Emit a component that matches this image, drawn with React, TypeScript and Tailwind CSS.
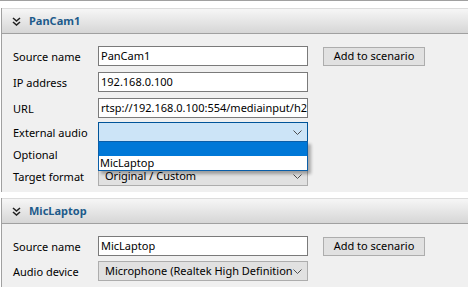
const font = "font-['Noto_Sans',sans-serif]";

const Chevron = () => (
  <svg width="9" height="5" viewBox="0 0 9 5" className="shrink-0">
    <polyline points="0.5,0.5 4.5,4.5 8.5,0.5" fill="none" stroke="#4d4d4d" strokeWidth="1" />
  </svg>
);

const DoubleChevron = () => (
  <svg width="9" height="9" viewBox="0 0 9 9">
    <polyline points="1,1 4.5,4 8,1" fill="none" stroke="#222" strokeWidth="1.6" />
    <polyline points="1,5 4.5,8 8,5" fill="none" stroke="#222" strokeWidth="1.6" />
  </svg>
);

const Header = ({ title }: { title: string }) => (
  <div className="h-[26px] flex items-center gap-[8px] pl-[10px] bg-[linear-gradient(#f6f6f6,#d6d6d6)] border-t border-[#dcdcdc] border-b border-b-[#a0a0a0]">
    <DoubleChevron />
    <span className="text-[11px] font-bold text-[#1d5b8b]">{title}</span>
  </div>
);

const Label = ({ children }: { children: string }) => (
  <div className="w-[85px] text-[11px] text-black leading-none">{children}</div>
);

const TextInput = ({ value }: { value: string }) => (
  <div className="w-[210px] h-[20px] border border-[#7a7a7a] bg-white pl-[2px] flex items-center overflow-hidden whitespace-nowrap text-[11px] text-black">
    {value}
  </div>
);

const Select = ({ value, focused }: { value: string; focused?: boolean }) => (
  <div
    className={
      focused
        ? "w-[210px] h-[20px] border border-[#005499] bg-[#cce4f7] flex items-center pl-[6px] pr-[5px] text-[11px]"
        : "w-[210px] h-[20px] border border-[#adadad] bg-[#e1e1e1] flex items-center pl-[6px] pr-[5px] text-[11px]"
    }
  >
    <span className="flex-1 overflow-hidden whitespace-nowrap text-black">{value}</span>
    <Chevron />
  </div>
);

const AddButton = () => (
  <div className="ml-[15px] w-[102px] h-[19px] border border-[#adadad] bg-[#e1e1e1] flex items-center justify-center text-[11px] text-black">
    Add to scenario
  </div>
);

const Row = ({ label, children, className }: { label: string; children: React.ReactNode; className?: string }) => (
  <div className={`flex items-center ${className ?? ""}`}>
    <Label>{label}</Label>
    {children}
  </div>
);

export default function App() {
  return (
    <div className={`w-[468px] h-[302px] bg-white overflow-hidden ${font}`}>
      <div className="h-px bg-[#a0a0a0]" />
      <div className="h-[7px]" />

      <div className="border-l border-[#a0a0a0] ml-[1px]">
        <Header title="PanCam1" />
        <div className="bg-[#f0f0f0] pl-[11px] pt-[12px] pb-[6px] flex flex-col">
          <Row label="Source name">
            <TextInput value="PanCam1" />
            <AddButton />
          </Row>
          <Row label="IP address" className="mt-[6px]">
            <TextInput value="192.168.0.100" />
          </Row>
          <Row label="URL" className="mt-[6px]">
            <TextInput value="rtsp://192.168.0.100:554/mediainput/h264" />
          </Row>
          <Row label="External audio" className="mt-[4px] relative z-10">
            <div className="relative">
              <Select value="" focused />
              <div className="absolute left-0 top-[19px] w-[210px] border border-[#0a5ea8] bg-white shadow-[3px_3px_3px_rgba(0,0,0,0.3)]">
                <div className="h-[14px] bg-[#0078d7]" />
                <div className="h-[14px] flex items-center pl-[1px] text-[11px] text-black">MicLaptop</div>
              </div>
            </div>
          </Row>
          <Row label="Optional" className="mt-[4px] h-[16px]">
            <div />
          </Row>
          <Row label="Target format" className="mt-[4px]">
            <Select value="Original / Custom" />
          </Row>
        </div>
      </div>

      <div className="h-[6px]" />

      <div className="border-l border-[#a0a0a0] ml-[1px]">
        <Header title="MicLaptop" />
        <div className="bg-[#f0f0f0] pl-[11px] pt-[12px] pb-[6px] flex flex-col">
          <Row label="Source name">
            <TextInput value="MicLaptop" />
            <AddButton />
          </Row>
          <Row label="Audio device" className="mt-[5px]">
            <Select value="Microphone (Realtek High Definition Audio)" />
          </Row>
        </div>
      </div>
    </div>
  );
}
